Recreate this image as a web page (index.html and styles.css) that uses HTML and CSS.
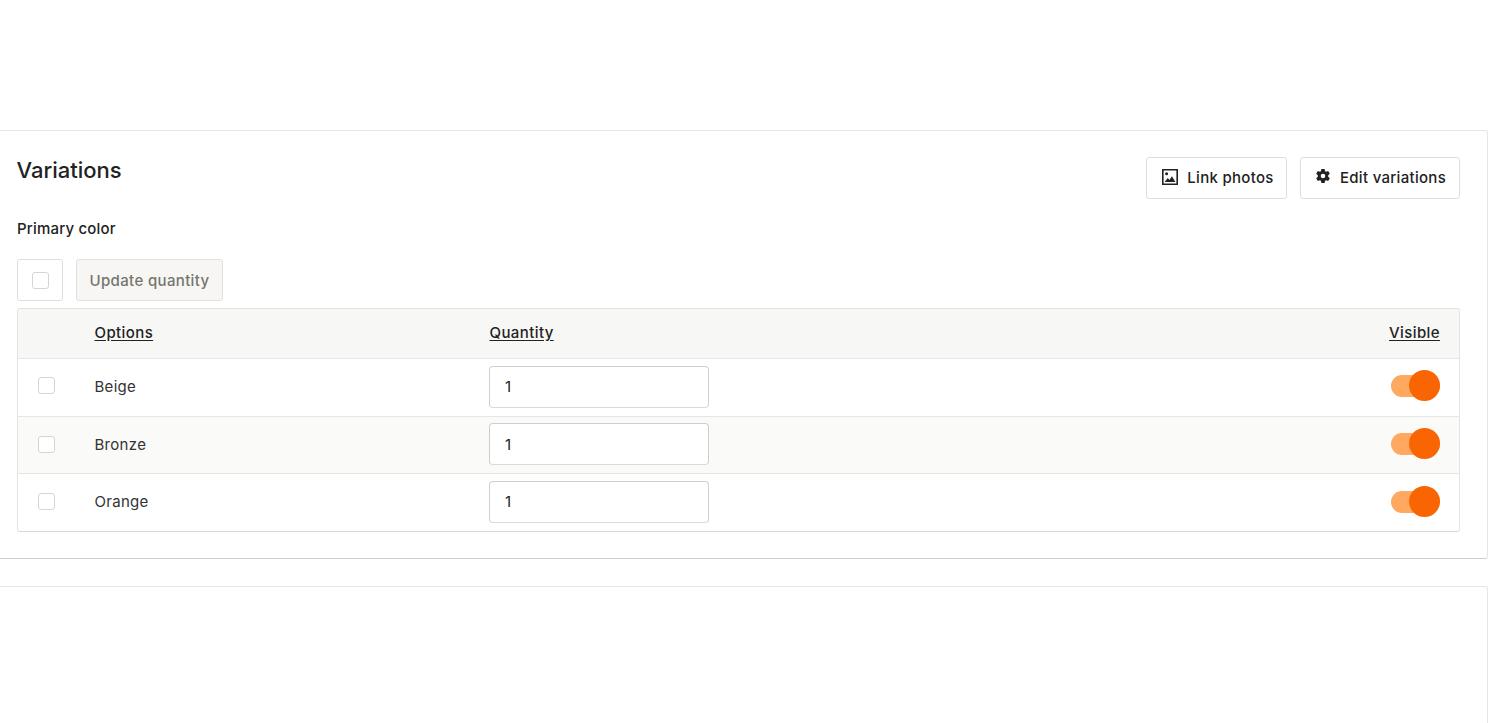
FILE: index.html
```html
<!DOCTYPE html>
<html lang="en">
<head>
<meta charset="utf-8">
<title>Variations</title>
<link rel="stylesheet" href="styles.css">
</head>
<body>
<main class="page">
  <section class="card">
    <header class="card-head">
      <h2 class="title">Variations</h2>
      <div class="actions">
        <button class="btn" type="button">
          <svg class="icon" viewBox="0 0 18 18" aria-hidden="true"><path fill-rule="evenodd" d="M1 1h16v16H1zM2.600 2.600v12.800h12.800V2.600z"/><circle cx="5.600" cy="5.800" r="1.500"/><path d="M3.600 14l3.200-4 1.700 1.900 2.400-3.600 3.500 5.700z"/></svg>
          Link photos
        </button>
        <button class="btn" type="button">
          <svg class="icon gear" viewBox="0 0 24 24" aria-hidden="true"><path fill-rule="evenodd" d="M9.600 1.500h4.800l.7 3.200 1.600.9 3.100-1 2.400 4.200-2.400 2.200v2l2.400 2.200-2.400 4.200-3.100-1-1.600.9-.7 3.200H9.600l-.7-3.200-1.600-.9-3.100 1-2.400-4.200 2.400-2.200v-2L1.800 8.800l2.400-4.200 3.100 1 1.600-.9zM12 8.500a3.500 3.500 0 1 0 0 7 3.500 3.500 0 0 0 0-7z"/></svg>
          Edit variations
        </button>
      </div>
    </header>
    <h3 class="subtitle">Primary color</h3>
    <div class="toolbar">
      <label class="select-all"><span class="check"></span></label>
      <button class="btn btn-muted" type="button">Update quantity</button>
    </div>
    <div class="table">
      <div class="row row-head">
        <span></span>
        <a class="sort">Options</a>
        <a class="sort">Quantity</a>
        <a class="sort end">Visible</a>
      </div>
      <div class="row row-1">
        <span class="check"></span>
        <span class="name">Beige</span>
        <input class="qty" type="text" value="1">
        <span class="toggle"><span class="knob"></span></span>
      </div>
      <div class="row row-2 alt">
        <span class="check"></span>
        <span class="name">Bronze</span>
        <input class="qty" type="text" value="1">
        <span class="toggle"><span class="knob"></span></span>
      </div>
      <div class="row row-3">
        <span class="check"></span>
        <span class="name">Orange</span>
        <input class="qty" type="text" value="1">
        <span class="toggle"><span class="knob"></span></span>
      </div>
    </div>
  </section>
  <section class="card card-next"></section>
</main>
</body>
</html>
```
FILE: styles.css
```css
* { box-sizing: border-box; }
html, body { margin: 0; height: 100%; background: #fff; overflow: hidden; }
body {
  font-family: "Inter", "Liberation Sans", sans-serif;
  color: #222;
  font-size: 15px;
}
.page {
  width: 1488px;
  padding-top: 130px;
  display: flex;
  flex-direction: column;
  gap: 27px;
}
.card {
  background: #fff;
  border: 1px solid #e6e6e4;
  border-left: 0;
  border-bottom: 1px solid #cfcfcd;
  border-radius: 0 3px 3px 0;
  padding: 26px 27px 26px 17px;
}
.card-next {
  height: 140px;
  padding: 0;
  border-bottom: 0;
}
.card-head {
  display: flex;
  justify-content: space-between;
  align-items: flex-start;
  height: 42px;
}
.title {
  margin: 0 0 0 -.5px;
  font-size: 22px;
  font-weight: 500;
  line-height: 26px;
  color: #222;
}
.actions { display: flex; gap: 13px; }
.btn {
  display: inline-flex;
  align-items: center;
  justify-content: center;
  gap: 8px;
  height: 42px;
  padding: 0 0 2px;
  background: #fff;
  border: 1px solid #dedede;
  border-radius: 3px;
  font: 500 15px "Inter", "Liberation Sans", sans-serif;
  letter-spacing: .3px;
  color: #222;
}
.btn:first-child { width: 141px; padding-left: 2px; }
.btn:last-child { width: 160px; }
.toolbar .btn { width: 147px; letter-spacing: .35px; padding: 0; }
.icon { width: 18px; height: 18px; fill: #222; flex: none; }
.gear { width: 16px; height: 16px; margin: -2px 1px 0 1px; }
.subtitle {
  margin: 20px 0 0;
  font-size: 15px;
  font-weight: 500;
  line-height: 20px;
  letter-spacing: .2px;
  color: #222;
}
.toolbar {
  display: flex;
  gap: 13px;
  margin-top: 20px;
  margin-bottom: 7px;
}
.select-all {
  width: 46px;
  height: 42px;
  display: flex;
  align-items: center;
  justify-content: center;
  border: 1px solid #dedede;
  border-radius: 3px;
}
.check {
  width: 17px;
  height: 17px;
  background: #fff;
  border: 1px solid #d5d5d2;
  border-radius: 3px;
  display: block;
}
.btn-muted {
  background: #f7f6f3;
  border-color: #e1e0dc;
  color: #757570;
}
.table {
  border: 1px solid #e3e3e1;
  border-bottom-color: #d8d8d6;
  border-radius: 3px;
  height: 224px;
  overflow: hidden;
}
.row {
  display: grid;
  grid-template-columns: 20px 431px 1fr auto;
  align-items: center;
  padding: 0 19px 2px 20px;
  height: 57.5px;
  border-top: 1px solid #e6e6e4;
  background: #fff;
}
.row-head {
  height: 49px;
  border-top: 0;
  background: #f7f7f5;
}
.row > :nth-child(2) { margin-left: 36.5px; }
.row-head > :nth-child(3) { margin-left: .5px; }
.row-1 { height: 58px; }
.row-2 { height: 57px; }
.row-3 { height: 58px; }
.alt { background: #fafaf8; }
.row-1 > .check, .row-1 > .toggle { margin-bottom: 2px; }
.sort {
  font-size: 15px;
  font-weight: 500;
  letter-spacing: .4px;
  color: #222;
  text-decoration: underline;
  text-underline-offset: 2px;
  justify-self: start;
}
.end { justify-self: end; }
.name { font-size: 15px; letter-spacing: .3px; color: #333; }
.qty {
  width: 220px;
  height: 42px;
  padding: 0 15px;
  background: #fff;
  border: 1px solid #cfcfcd;
  border-bottom-color: #dadad8;
  border-radius: 4px;
  font: 400 15px "Inter", "Liberation Sans", sans-serif;
  color: #222;
}
.toggle {
  position: relative;
  display: block;
  width: 49px;
  height: 22px;
  background: #ffa85f;
  border-radius: 11px;
  justify-self: end;
}
.knob {
  position: absolute;
  right: 0;
  top: -5px;
  width: 31px;
  height: 31px;
  border-radius: 50%;
  background: #f96502;
}
```
